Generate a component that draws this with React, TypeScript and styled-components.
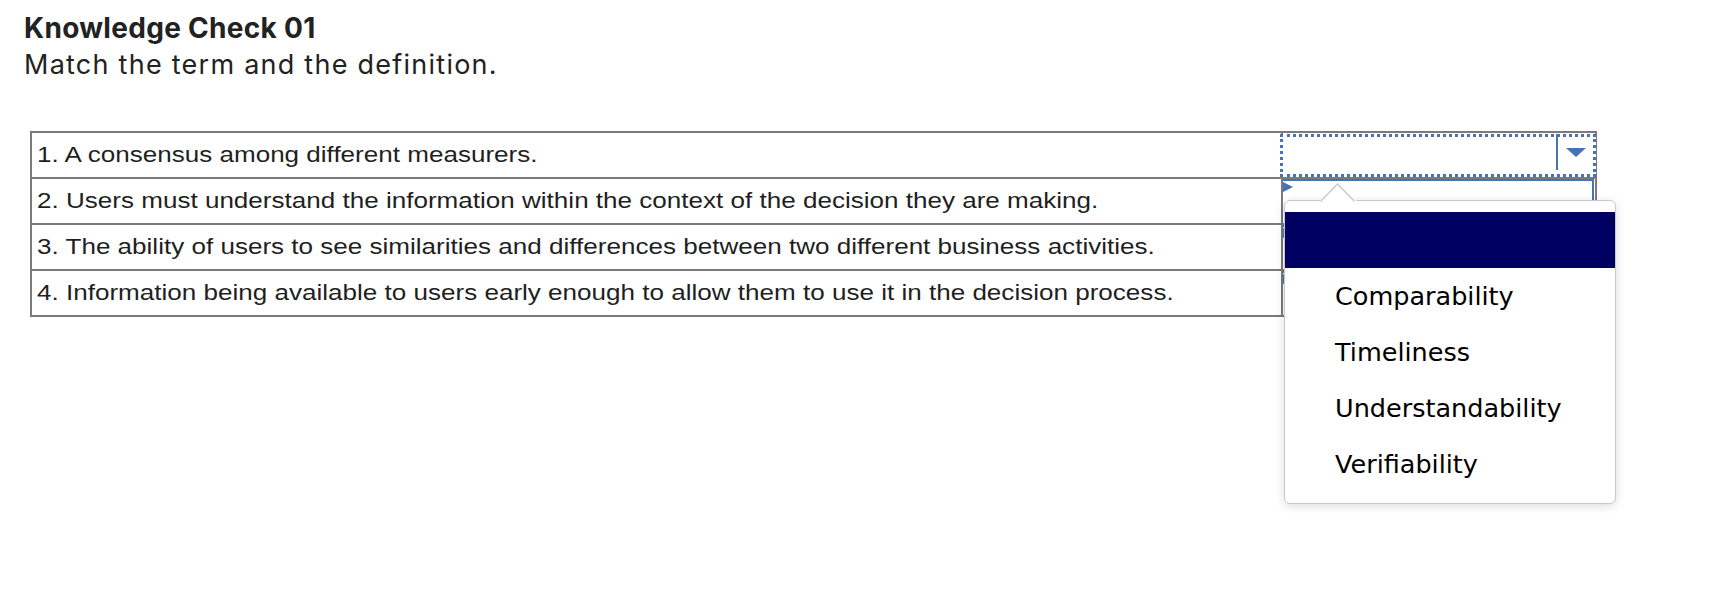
import React from "react";
import styled, { createGlobalStyle } from "styled-components";

const GlobalStyle = createGlobalStyle`
  html, body {
    margin: 0;
    padding: 0;
    background: #ffffff;
  }
  body {
    font-family: "Liberation Sans", Arial, sans-serif;
  }
`;

const BLUE = "#4872b6";
const GRID = "#7a7a7a";

const Page = styled.main`
  box-sizing: border-box;
  width: 1727px;
  height: 616px;
  padding: 11px 0 0 24px;
  overflow: hidden;
  background: #ffffff;
`;

const Header = styled.header`
  display: flex;
  flex-direction: column;
  gap: 4px;
`;

const Title = styled.h1`
  margin: 0;
  font-family: "Inter", "Lato", sans-serif;
  font-weight: 700;
  font-size: 28px;
  line-height: 34px;
  letter-spacing: 0.3px;
  color: #222222;
`;

const Subtitle = styled.p`
  margin: 0;
  font-family: "Inter", "Lato", sans-serif;
  font-weight: 400;
  font-size: 27px;
  line-height: 32px;
  letter-spacing: 1.25px;
  color: #222222;
`;

const MatchTable = styled.table`
  margin: 50px 0 0 6px;
  border-collapse: separate;
  border-spacing: 0;
  border-top: 2px solid ${GRID};
  border-left: 2px solid ${GRID};
`;

const DefinitionCell = styled.td`
  box-sizing: border-box;
  width: 1251px;
  height: 46px;
  padding: 0 0 0 5px;
  border-right: 2px solid ${GRID};
  border-bottom: 2px solid ${GRID};
  vertical-align: middle;
  font-size: 22px;
  line-height: 26px;
  color: #1f1f1f;
  white-space: nowrap;
`;

const Stretched = styled.span`
  display: inline-block;
  transform: scaleX(1.184);
  transform-origin: left center;
`;

const AnswerCell = styled.td`
  box-sizing: border-box;
  width: 314px;
  height: 46px;
  padding: 0;
  border-right: 2px solid ${GRID};
  border-bottom: 2px solid ${GRID};
  vertical-align: top;
`;

const SelectBox = styled.div<{ $focused?: boolean }>`
  position: relative;
  box-sizing: border-box;
  display: flex;
  background: #ffffff;
  ${(p) =>
    p.$focused
      ? `
    margin: 1px -1px 0 -3px;
    height: 43px;
    border: 3px dotted ${BLUE};
  `
      : `
    margin: 0 1px 0 0;
    height: 44px;
    border-top: 2px solid ${BLUE};
    border-right: 2px solid ${BLUE};
    &::before {
      content: "";
      position: absolute;
      top: 1px;
      left: 0;
      border-left: 10px solid ${BLUE};
      border-top: 5px solid transparent;
      border-bottom: 5px solid transparent;
    }
  `}
`;

const SelectValue = styled.div`
  flex: 1;
`;

const ArrowButton = styled.div`
  box-sizing: border-box;
  width: 37px;
  height: 36px;
  margin-top: -3px;
  border-left: 2px solid ${BLUE};
  display: flex;
  align-items: center;
  justify-content: center;
`;

const Caret = styled.span`
  width: 0;
  height: 0;
  border-left: 10px solid transparent;
  border-right: 10px solid transparent;
  border-top: 9px solid ${BLUE};
`;

const Popup = styled.div`
  position: absolute;
  left: 1px;
  top: 63px;
  z-index: 10;
  box-sizing: border-box;
  width: 332px;
  padding: 11px 0;
  background: #ffffff;
  border: 1px solid #c8c8c8;
  border-radius: 6px;
  box-shadow: 0 2px 10px rgba(0, 0, 0, 0.14);
`;

const Notch = styled.svg`
  position: absolute;
  left: 35px;
  top: -18px;
  display: block;
`;

const Option = styled.div<{ $active?: boolean }>`
  height: 56px;
  display: flex;
  align-items: center;
  padding-left: 50px;
  padding-bottom: 1px;
  box-sizing: border-box;
  font-family: "DejaVu Sans", Verdana, sans-serif;
  font-size: 25.5px;
  color: #000000;
  background: ${(p) => (p.$active ? "#000062" : "transparent")};
`;

const definitions = [
  "1. A consensus among different measurers.",
  "2. Users must understand the information within the context of the decision they are making.",
  "3. The ability of users to see similarities and differences between two different business activities.",
  "4. Information being available to users early enough to allow them to use it in the decision process.",
];

const options = ["", "Comparability", "Timeliness", "Understandability", "Verifiability"];

function Dropdown() {
  return (
    <Popup role="listbox">
      <Notch width="36" height="20" viewBox="0 0 36 20">
        <path d="M0.5 18 L17.5 1 L34.5 18 Z" fill="#ffffff" />
        <rect x="0" y="17" width="36" height="3" fill="#ffffff" />
        <path d="M0.5 18.5 L17.5 1 L34.5 18.5" fill="none" stroke="#c8c8c8" strokeWidth="1.3" />
      </Notch>
      {options.map((o, i) => (
        <Option key={i} $active={i === 0} role="option">
          {o}
        </Option>
      ))}
    </Popup>
  );
}

export default function App() {
  return (
    <>
      <GlobalStyle />
      <Page>
        <Header>
          <Title>Knowledge Check 01</Title>
          <Subtitle>Match the term and the definition.</Subtitle>
        </Header>
        <MatchTable>
          <tbody>
            {definitions.map((d, i) => (
              <tr key={i}>
                <DefinitionCell>
                  <Stretched>{d}</Stretched>
                </DefinitionCell>
                <AnswerCell>
                  {i === 0 ? (
                    <SelectBox $focused>
                      <SelectValue />
                      <ArrowButton>
                        <Caret />
                      </ArrowButton>
                      <Dropdown />
                    </SelectBox>
                  ) : (
                    <SelectBox />
                  )}
                </AnswerCell>
              </tr>
            ))}
          </tbody>
        </MatchTable>
      </Page>
    </>
  );
}
